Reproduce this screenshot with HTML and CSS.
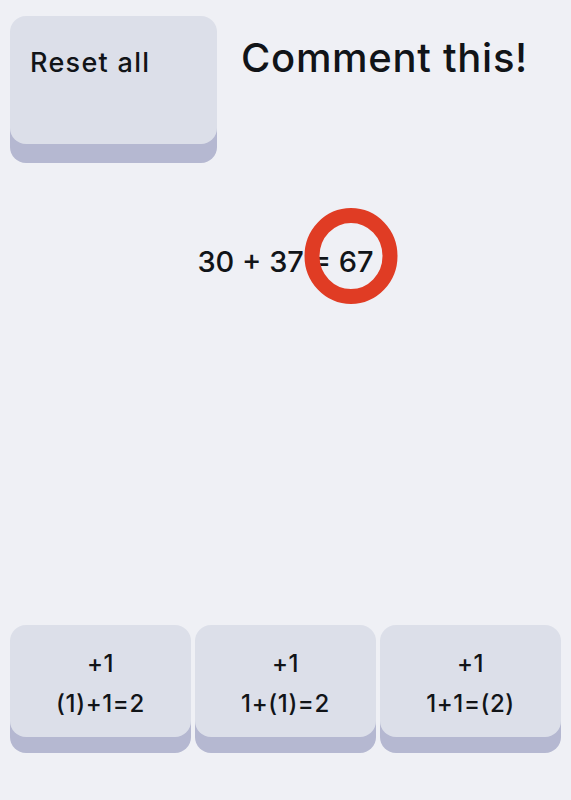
FILE: index.html
```html
<!DOCTYPE html>
<html lang="en">
<head>
<meta charset="utf-8">
<link rel="stylesheet" href="styles.css">
</head>
<body>
<div class="page">
  <header class="top">
    <button class="key key-reset">Reset all</button>
    <h1 class="title">Comment this!</h1>
  </header>
  <div class="equation">
    <span class="eq-text">30 + 37 = 67<svg class="circle" width="94" height="96" viewBox="0 0 94 96" aria-hidden="true"><ellipse cx="47" cy="48" rx="39" ry="40.5" fill="none" stroke="#e03c24" stroke-width="15"/></svg></span>
  </div>
  <div class="spacer"></div>
  <div class="row">
    <button class="key key-small"><span>+1</span><span>(1)+1=2</span></button>
    <button class="key key-small"><span>+1</span><span>1+(1)=2</span></button>
    <button class="key key-small"><span>+1</span><span>1+1=(2)</span></button>
  </div>
</div>
</body>
</html>
```

FILE: styles.css
```css
* { box-sizing: border-box; }
html, body {
  margin: 0;
  padding: 0;
  background: #eff0f5;
}
body {
  font-family: "Inter", "Open Sans", sans-serif;
  font-weight: 500;
  color: #111418;
}
.page {
  height: 800px;
  display: flex;
  flex-direction: column;
  padding: 16px 10px 63px 10px;
}
.top {
  display: flex;
  align-items: flex-start;
  gap: 24px;
}
.key {
  border: none;
  background: #dcdfe9;
  border-radius: 16px;
  font-family: inherit;
  font-weight: 500;
  color: #111418;
  cursor: pointer;
}
.key-reset {
  width: 207px;
  height: 128px;
  box-shadow: 0 19px 0 #b5b8d1;
  font-size: 27px;
  letter-spacing: 1.3px;
  line-height: 38px;
  text-align: left;
  padding: 28px 20px;
  display: flex;
  align-items: flex-start;
  flex-shrink: 0;
}
.title {
  margin: 18px 0 0;
  font-size: 40px;
  font-weight: 500;
  letter-spacing: 0.7px;
  line-height: 48px;
  white-space: nowrap;
}
.equation {
  margin-top: 98px;
  display: flex;
  justify-content: center;
  font-size: 29px;
  line-height: 40px;
}
.eq-text {
  position: relative;
}
.circle {
  position: absolute;
  left: 107px;
  top: -34px;
}
.spacer { flex: 1; }
.row {
  display: flex;
  gap: 4px;
}
.key-small {
  flex: 1;
  height: 112px;
  box-shadow: 0 16px 0 #b5b8d1;
  font-size: 24px;
  letter-spacing: 0.6px;
  line-height: 40px;
  display: flex;
  flex-direction: column;
  align-items: center;
  justify-content: center;
  padding: 6px 0 0;
}
```
